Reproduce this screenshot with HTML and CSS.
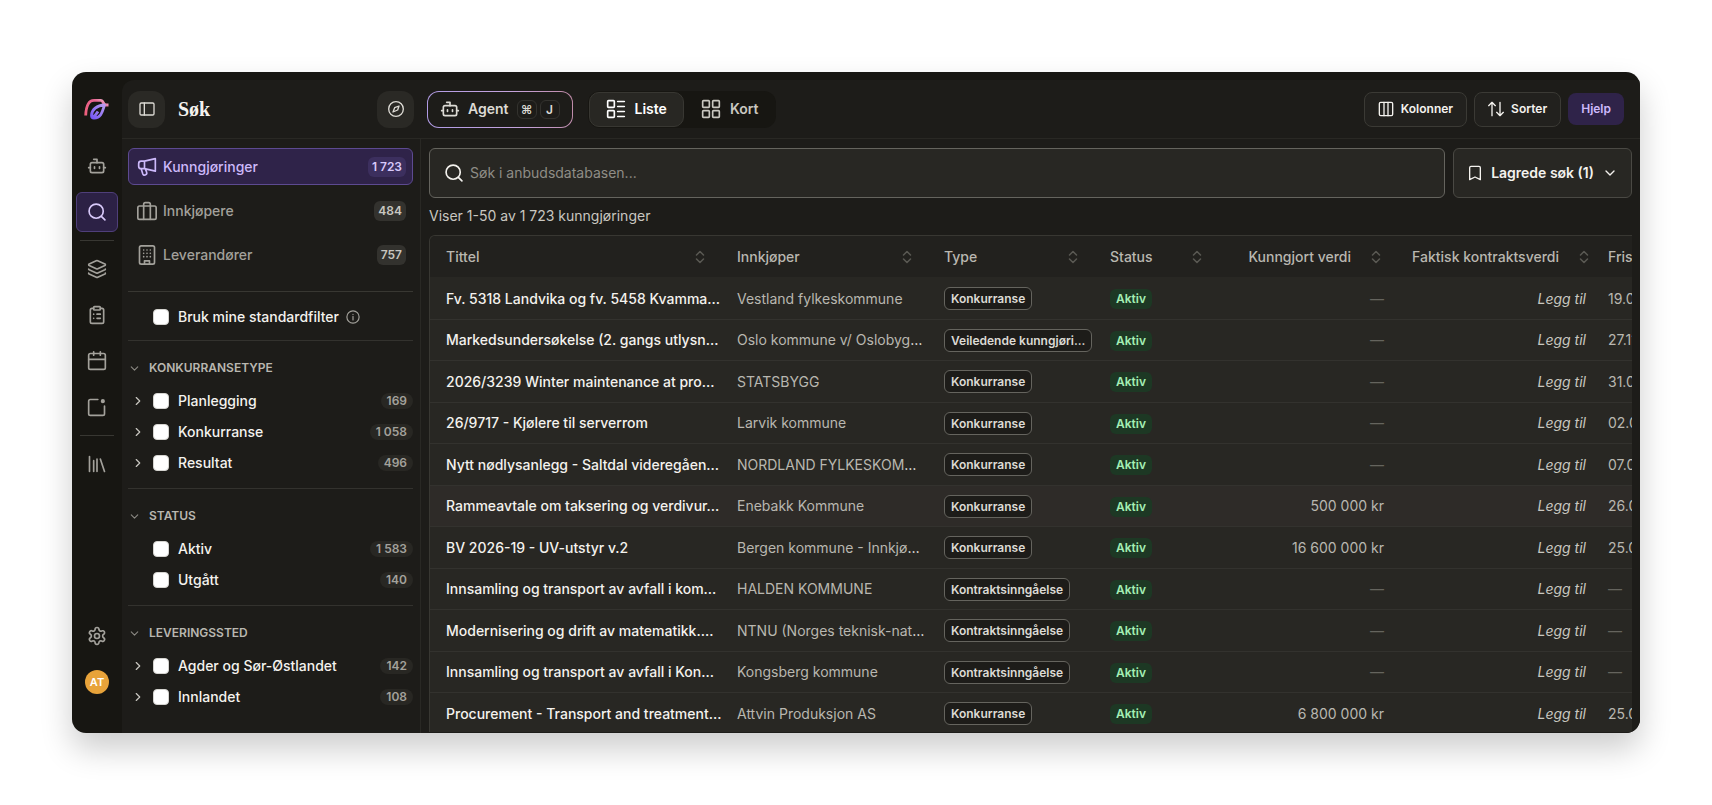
FILE: index.html
```
<!DOCTYPE html>
<html lang="no">

<head>
	<meta charset="UTF-8"/>
	<meta name="viewport" content="width=device-width, initial-scale=1.0"/>
	<title>Søk</title>
	<link rel="stylesheet" href="styles.css">
</head>

<body>
<!-- icons used more than once -->
<svg class="sprite" aria-hidden="true">
	<symbol id="bot" viewBox="0 0 24 24"><path d="M12 8V4H8"/><rect width="16" height="12" x="4" y="8" rx="2"/><path d="M2 14h2M20 14h2M15 13v2M9 13v2"/></symbol>
	<symbol id="search" viewBox="0 0 24 24"><circle cx="11" cy="11" r="8.5"/><path d="m21.5 21.5-4.3-4.3"/></symbol>
	<symbol id="down" viewBox="0 0 24 24"><path d="m6 9 6 6 6-6"/></symbol>
	<symbol id="right" viewBox="0 0 24 24"><path d="m9 18 6-6-6-6"/></symbol>
	<symbol id="sort" viewBox="0 0 10 14"><path d="m1.5 5 3.500-3.500L8.500 5M1.500 9 5 12.500 8.500 9"/></symbol>
</svg>

<div class="app">
	<nav class="rail">
		<svg class="logo" viewBox="0 0 28 24">
			<defs>
				<linearGradient id="pink" x1="0" y1="1" x2="1" y2="0">
					<stop offset="0" stop-color="#ee5f7c"/>
					<stop offset="0.700" stop-color="#e8638f"/>
					<stop offset="1" stop-color="#f3c3d8"/>
				</linearGradient>
				<linearGradient id="violet" x1="0" y1="1" x2="1" y2="0">
					<stop offset="0" stop-color="#7657f2"/>
					<stop offset="1" stop-color="#b79bf0"/>
				</linearGradient>
			</defs>
			<path d="M2.700 19.500C3 12 5 4.300 11 4.300h6.500c3.500 0 2 4.700 5.500 4.700h2.500" stroke="url(#pink)"/>
			<path d="M21.500 9C14 9 8.500 14 8.500 19.500c0 1.800 1 2.500 2.500 2.500 7.500 0 8.500-7 10.500-13ZM9.500 21.500c2.500-1.500 4-3.500 5.500-6" stroke="url(#violet)"/>
		</svg>
		<a class="rail-item" href="#" aria-label="Agent"><svg class="icon"><use href="#bot"/></svg></a>
		<a class="rail-item active" href="#" aria-label="Søk"><svg class="icon"><use href="#search"/></svg></a>
		<hr>
		<a class="rail-item" href="#" aria-label="Lag"><svg class="icon" viewBox="0 0 24 24"><path d="M12.800 2.200a2 2 0 0 0-1.700 0L2.600 6.100a1 1 0 0 0 0 1.800l8.600 3.900a2 2 0 0 0 1.700 0l8.600-3.900a1 1 0 0 0 0-1.800Z"/><path d="M2 12a1 1 0 0 0 .6.900l8.600 3.900a2 2 0 0 0 1.700 0l8.600-3.900A1 1 0 0 0 22 12"/><path d="M2 17a1 1 0 0 0 .6.900l8.600 3.900a2 2 0 0 0 1.700 0l8.600-3.900A1 1 0 0 0 22 17"/></svg></a>
		<a class="rail-item" href="#" aria-label="Oppgaver"><svg class="icon" viewBox="0 0 24 24"><rect width="8" height="4" x="8" y="2" rx="1"/><path d="M16 4h2a2 2 0 0 1 2 2v14a2 2 0 0 1-2 2H6a2 2 0 0 1-2-2V6a2 2 0 0 1 2-2h2M12 11h4M12 16h4M8 11h.01M8 16h.01"/></svg></a>
		<a class="rail-item" href="#" aria-label="Kalender"><svg class="icon" viewBox="0 0 24 24"><path d="M8 1v4M16 1v4M2 10h20"/><rect width="20" height="19" x="2" y="3" rx="2"/></svg></a>
		<a class="rail-item" href="#" aria-label="Varsler"><svg class="icon" viewBox="0 0 24 24"><path d="M13 3H4a2 2 0 0 0-2 2v15a2 2 0 0 0 2 2h15a2 2 0 0 0 2-2v-9"/><circle cx="19" cy="5" r="1.500" fill="currentColor"/></svg></a>
		<hr>
		<a class="rail-item" href="#" aria-label="Bibliotek"><svg class="icon" viewBox="0 0 24 24"><path d="m16 6 5 15M12 6v15M8 8v13M3 3v18"/></svg></a>
		<div class="rail-bottom">
			<a class="rail-item" href="#" aria-label="Innstillinger"><svg class="icon" viewBox="0 0 24 24"><path d="M9.700 4.100a2.300 2.300 0 0 1 4.600 0 2.300 2.300 0 0 0 3.300 1.900 2.300 2.300 0 0 1 2.300 4 2.300 2.300 0 0 0 0 4 2.300 2.300 0 0 1-2.300 4 2.300 2.300 0 0 0-3.300 1.900 2.300 2.300 0 0 1-4.600 0 2.300 2.300 0 0 0-3.300-1.900 2.300 2.300 0 0 1-2.300-4 2.300 2.300 0 0 0 0-4 2.300 2.300 0 0 1 2.300-4 2.300 2.300 0 0 0 3.300-1.900"/><circle cx="12" cy="12" r="3"/></svg></a>
			<button class="avatar">AT</button>
		</div>
	</nav>

	<div class="panel">
		<header class="topbar">
			<div class="topbar-side">
				<button class="square" aria-label="Skjul meny"><svg class="icon small" viewBox="0 0 24 24"><rect width="21" height="18" x="1.500" y="3" rx="2"/><path d="M8 3v18"/></svg></button>
				<h1>Søk</h1>
				<button class="square" aria-label="Utforsk"><svg class="icon small" viewBox="0 0 24 24"><circle cx="12" cy="12" r="11"/><path d="m16.500 7.500-2 6-7 3 2.500-6.500Z"/></svg></button>
			</div>
			<div class="topbar-main">
				<button class="agent">
					<svg class="icon"><use href="#bot"/></svg>
					<span>Agent</span>
					<span class="keys"><kbd>⌘</kbd><kbd>J</kbd></span>
				</button>
				<div class="segmented">
					<button class="active"><svg class="icon" viewBox="0 0 24 24"><rect width="8" height="8" x="2" y="2" rx="1"/><rect width="8" height="8" x="2" y="14" rx="1"/><path d="M14 3h8M14 9h8M14 15h8M14 21h8"/></svg>Liste</button>
					<button><svg class="icon" viewBox="0 0 24 24"><rect width="8" height="8" x="2" y="2" rx="1"/><rect width="8" height="8" x="14" y="2" rx="1"/><rect width="8" height="8" x="14" y="14" rx="1"/><rect width="8" height="8" x="2" y="14" rx="1"/></svg>Kort</button>
				</div>
				<div class="actions">
					<button class="tool"><svg class="icon small" viewBox="0 0 24 24"><rect width="20" height="20" x="2" y="2" rx="2"/><path d="M9 2v20M15 2v20"/></svg>Kolonner</button>
					<button class="tool"><svg class="icon small" viewBox="0 0 24 24"><path d="m1 7 5-5 5 5M6 2v20M23 17l-5 5-5-5M18 22V2"/></svg>Sorter</button>
					<button class="help">Hjelp</button>
				</div>
			</div>
		</header>

		<div class="body">
			<aside class="sidebar">
				<nav class="tabs">
					<a class="active" href="#"><svg class="icon" viewBox="0 0 24 24"><path d="m9 5 13-3v15L9 14M9 5v9H5a3 3 0 0 1-3-3V8a3 3 0 0 1 3-3ZM5 14l2 6.500a2 2 0 0 0 3 1c1.500-.5 2-2 1.500-3.500L10 14.500"/></svg><span>Kunngjøringer</span><b>1 723</b></a>
					<a href="#"><svg class="icon" viewBox="0 0 24 24"><rect width="22" height="16" x="1" y="6" rx="2"/><path d="M16 22V4a2 2 0 0 0-2-2h-4a2 2 0 0 0-2 2v18"/></svg><span>Innkjøpere</span><b>484</b></a>
					<a href="#"><svg class="icon" viewBox="0 0 24 24"><rect width="18" height="22" x="3" y="1" rx="2"/><path d="M9 23v-4h6v4M8 6h.01M12 6h.01M16 6h.01M8 10h.01M12 10h.01M16 10h.01M8 14h.01M12 14h.01M16 14h.01"/></svg><span>Leverandører</span><b>757</b></a>
				</nav>
				<div class="standard">
					<label class="check"><input type="checkbox">Bruk mine standardfilter</label>
					<svg class="icon info" viewBox="0 0 24 24"><circle cx="12" cy="12" r="10.500"/><path d="M12 17v-6M12 7.500h.01"/></svg>
				</div>
				<section class="filter">
					<h2><svg class="icon tiny"><use href="#down"/></svg>KONKURRANSETYPE</h2>
					<div class="option"><svg class="icon open"><use href="#right"/></svg><label class="check"><input type="checkbox">Planlegging</label><span class="count">169</span></div>
					<div class="option"><svg class="icon open"><use href="#right"/></svg><label class="check"><input type="checkbox">Konkurranse</label><span class="count">1 058</span></div>
					<div class="option"><svg class="icon open"><use href="#right"/></svg><label class="check"><input type="checkbox">Resultat</label><span class="count">496</span></div>
				</section>
				<section class="filter">
					<h2><svg class="icon tiny"><use href="#down"/></svg>STATUS</h2>
					<div class="option"><label class="check"><input type="checkbox">Aktiv</label><span class="count">1 583</span></div>
					<div class="option"><label class="check"><input type="checkbox">Utgått</label><span class="count">140</span></div>
				</section>
				<section class="filter">
					<h2><svg class="icon tiny"><use href="#down"/></svg>LEVERINGSSTED</h2>
					<div class="option"><svg class="icon open"><use href="#right"/></svg><label class="check"><input type="checkbox">Agder og Sør-Østlandet</label><span class="count">142</span></div>
					<div class="option"><svg class="icon open"><use href="#right"/></svg><label class="check"><input type="checkbox">Innlandet</label><span class="count">108</span></div>
				</section>
			</aside>

			<main class="content">
				<div class="searchbar">
					<label class="searchbox">
						<svg class="icon"><use href="#search"/></svg>
						<input type="text" placeholder="Søk i anbudsdatabasen..." aria-label="Søk i anbudsdatabasen">
					</label>
					<button class="saved"><svg class="icon small" viewBox="0 0 24 24"><path d="m20 22-8-4-8 4V4a2 2 0 0 1 2-2h12a2 2 0 0 1 2 2Z"/></svg>Lagrede søk (1)<svg class="icon small"><use href="#down"/></svg></button>
				</div>
				<p class="summary">Viser 1-50 av 1 723 kunngjøringer</p>
				<div class="table-wrap">
					<table>
						<colgroup>
							<col class="c-title"><col class="c-buyer"><col class="c-type"><col class="c-status"><col class="c-value"><col class="c-contract"><col class="c-date">
						</colgroup>
						<thead>
						<tr>
							<th><div>Tittel<svg class="sort"><use href="#sort"/></svg></div></th>
							<th><div>Innkjøper<svg class="sort"><use href="#sort"/></svg></div></th>
							<th><div>Type<svg class="sort"><use href="#sort"/></svg></div></th>
							<th><div>Status<svg class="sort"><use href="#sort"/></svg></div></th>
							<th class="num"><div>Kunngjort verdi<svg class="sort"><use href="#sort"/></svg></div></th>
							<th class="num"><div>Faktisk kontraktsverdi<svg class="sort"><use href="#sort"/></svg></div></th>
							<th><div>Frist</div></th>
						</tr>
						</thead>
						<tbody>
						<tr><td>Fv. 5318 Landvika og fv. 5458 Kvamma…</td><td>Vestland fylkeskommune</td><td><span class="type">Konkurranse</span></td><td><span class="status">Aktiv</span></td><td class="num none">—</td><td class="num"><button class="add">Legg til</button></td><td>19.08.2026</td></tr>
						<tr><td>Markedsundersøkelse (2. gangs utlysn…</td><td>Oslo kommune v/ Oslobyg<i>…</i></td><td><span class="type">Veiledende kunngjøri...</span></td><td><span class="status">Aktiv</span></td><td class="num none">—</td><td class="num"><button class="add">Legg til</button></td><td>27.11.2026</td></tr>
						<tr><td>2026/3239 Winter maintenance at pro…</td><td>STATSBYGG</td><td><span class="type">Konkurranse</span></td><td><span class="status">Aktiv</span></td><td class="num none">—</td><td class="num"><button class="add">Legg til</button></td><td>31.08.2026</td></tr>
						<tr><td>26/9717 - Kjølere til serverrom</td><td>Larvik kommune</td><td><span class="type">Konkurranse</span></td><td><span class="status">Aktiv</span></td><td class="num none">—</td><td class="num"><button class="add">Legg til</button></td><td>02.09.2026</td></tr>
						<tr><td>Nytt nødlysanlegg - Saltdal videregåen…</td><td>NORDLAND FYLKESKOM<i>…</i></td><td><span class="type">Konkurranse</span></td><td><span class="status">Aktiv</span></td><td class="num none">—</td><td class="num"><button class="add">Legg til</button></td><td>07.09.2026</td></tr>
						<tr class="hovered"><td>Rammeavtale om taksering og verdivur…</td><td>Enebakk Kommune</td><td><span class="type">Konkurranse</span></td><td><span class="status">Aktiv</span></td><td class="num">500 000 kr</td><td class="num"><button class="add">Legg til</button></td><td>26.08.2026</td></tr>
						<tr><td>BV 2026-19 - UV-utstyr v.2</td><td>Bergen kommune - Innkjø<i>…</i></td><td><span class="type">Konkurranse</span></td><td><span class="status">Aktiv</span></td><td class="num">16 600 000 kr</td><td class="num"><button class="add">Legg til</button></td><td>25.08.2026</td></tr>
						<tr><td>Innsamling og transport av avfall i kom…</td><td>HALDEN KOMMUNE</td><td><span class="type">Kontraktsinngåelse</span></td><td><span class="status">Aktiv</span></td><td class="num none">—</td><td class="num"><button class="add">Legg til</button></td><td class="none">—</td></tr>
						<tr><td>Modernisering og drift av matematikk.…</td><td>NTNU (Norges teknisk-nat<i>…</i></td><td><span class="type">Kontraktsinngåelse</span></td><td><span class="status">Aktiv</span></td><td class="num none">—</td><td class="num"><button class="add">Legg til</button></td><td class="none">—</td></tr>
						<tr><td>Innsamling og transport av avfall i Kon…</td><td>Kongsberg kommune</td><td><span class="type">Kontraktsinngåelse</span></td><td><span class="status">Aktiv</span></td><td class="num none">—</td><td class="num"><button class="add">Legg til</button></td><td class="none">—</td></tr>
						<tr><td>Procurement - Transport and treatment…</td><td>Attvin Produksjon AS</td><td><span class="type">Konkurranse</span></td><td><span class="status">Aktiv</span></td><td class="num">6 800 000 kr</td><td class="num"><button class="add">Legg til</button></td><td>25.08.2026</td></tr>
						</tbody>
					</table>
				</div>
			</main>
		</div>
	</div>
</div>
</body>

</html>
```
FILE: styles.css
```
* {
	box-sizing: border-box;
}

body {
	margin: 0;
	height: 100vh;
	padding: 72px;
	background: #fff;
	color: #f4f2ee;
	font-family: Inter, "Liberation Sans", sans-serif;
	font-size: 14px;
	line-height: 20px;
	overflow: hidden;
}

button {
	font: inherit;
	color: inherit;
	border: none;
	background: none;
	padding: 0;
	cursor: pointer;
}

a {
	color: inherit;
	text-decoration: none;
}

.sprite {
	display: none;
}

.icon {
	width: 20px;
	height: 20px;
	flex: none;
	fill: none;
	stroke: currentColor;
	stroke-width: 2;
	stroke-linecap: round;
	stroke-linejoin: round;
}

.icon.small {
	width: 16px;
	height: 16px;
}

.app {
	height: 100%;
	display: flex;
	background: #171612;
	border-radius: 14px;
	overflow: hidden;
	box-shadow: 0 16px 32px rgba(0, 0, 0, 0.2);
}

/* left icon rail */
.rail {
	width: 50px;
	flex: none;
	display: flex;
	flex-direction: column;
	align-items: center;
	gap: 6px;
	padding: 24px 0 39px;
	color: #a3a19b;
}

.logo {
	width: 28px;
	height: 24px;
	margin-bottom: 20px;
	fill: none;
	stroke-width: 2.8;
	stroke-linejoin: round;
}

.rail-item {
	width: 42px;
	height: 40px;
	display: flex;
	align-items: center;
	justify-content: center;
	border-radius: 6px;
}

.rail-item.active {
	background: #2c2145;
	border: 1px solid #4f3f7a;
	color: #d8c9fa;
}

.rail hr {
	width: 34px;
	margin: 2px 0;
	border: none;
	border-top: 1px solid #383732;
}

.rail-bottom {
	margin-top: auto;
	display: flex;
	flex-direction: column;
	align-items: center;
	gap: 14px;
}

.avatar {
	width: 24px;
	height: 24px;
	border-radius: 50%;
	background: #e8a33a;
	color: #fff;
	font-size: 11px;
	font-weight: 600;
}

.panel {
	flex: 1;
	min-width: 0;
	display: flex;
	flex-direction: column;
	margin-top: 8px;
	background: #1d1c19;
	border-radius: 12px 0 0 0;
}

/* header */
.topbar {
	height: 59px;
	flex: none;
	display: flex;
	align-items: center;
	border-bottom: 1px solid #292824;
}

.topbar-side {
	width: 298px;
	display: flex;
	align-items: center;
	padding: 0 6px;
}

.topbar-side h1 {
	flex: 1;
	margin: 0 0 0 13px;
	font-family: "Liberation Serif", serif;
	font-size: 20px;
	font-weight: 700;
}

.square {
	width: 37px;
	height: 37px;
	display: flex;
	align-items: center;
	justify-content: center;
	background: #2a2925;
	border-radius: 12px;
	color: #dcdad4;
}

.topbar-main {
	flex: 1;
	display: flex;
	align-items: center;
	padding: 0 16px 0 7px;
}

.agent {
	height: 37px;
	display: flex;
	align-items: center;
	gap: 8px;
	padding: 0 12px;
	border: 1px solid transparent;
	border-radius: 12px;
	background: linear-gradient(#1d1c19, #1d1c19) padding-box, linear-gradient(75deg, #b09be6, #c4a3dc 60%, #c08aa6) border-box;
	color: #dcdad4;
	font-weight: 600;
}

.keys {
	display: flex;
	gap: 3px;
}

kbd {
	min-width: 20px;
	height: 19px;
	border: 1px solid #33322e;
	border-radius: 6px;
	font-family: Inter, "DejaVu Sans", sans-serif;
	font-size: 12px;
	line-height: 17px;
	text-align: center;
}

.segmented {
	display: flex;
	margin-left: 15px;
	padding: 1px;
	background: #171612;
	border-radius: 12px;
	font-weight: 600;
}

.segmented button {
	height: 35px;
	display: flex;
	align-items: center;
	gap: 9px;
	padding: 0 16px;
	border: 1px solid transparent;
	border-radius: 10px;
	color: #c9c7c0;
}

.segmented button.active {
	background: #282723;
	border-color: #383732;
	color: #fff;
}

.actions {
	margin-left: auto;
	display: flex;
	align-items: center;
	gap: 7px;
	font-size: 12px;
	font-weight: 600;
}

.tool {
	height: 35px;
	display: flex;
	align-items: center;
	gap: 7px;
	padding: 0 13px;
	border: 1px solid #3b3a35;
	border-radius: 8px;
	background: #22211e;
}

.help {
	height: 32px;
	padding: 0 13px;
	border-radius: 8px;
	background: #2f2349;
	color: #cdb9fb;
}

.body {
	flex: 1;
	min-height: 0;
	display: flex;
}

/* filters */
.sidebar {
	width: 299px;
	flex: none;
	padding: 9px 7px 0 6px;
	border-right: 1px solid #292824;
	overflow: hidden;
}

.tabs {
	display: flex;
	flex-direction: column;
	gap: 7px;
	padding-bottom: 18px;
}

.tabs a {
	height: 37px;
	display: flex;
	align-items: center;
	gap: 6px;
	padding: 0 6px 0 8px;
	border: 1px solid transparent;
	border-radius: 6px;
	color: #a3a19b;
	font-weight: 500;
}

.tabs span {
	flex: 1;
}

.tabs b {
	padding: 0 4px;
	border-radius: 6px;
	background: #33322e;
	color: #c9c7c0;
	font-size: 12px;
	font-weight: 600;
}

.tabs .active {
	background: #2f2349;
	border-color: #5d4a91;
	color: #cdb9fb;
}

.tabs .active b {
	background: #3c2f5e;
	color: #d8c9fa;
}

.standard {
	height: 50px;
	display: flex;
	align-items: center;
	gap: 7px;
	padding: 2px 0 0 25px;
	border-top: 1px solid #383732;
	border-bottom: 1px solid #33322e;
}

.icon.info {
	width: 14px;
	height: 14px;
	color: #a3a19b;
}

.check {
	display: flex;
	align-items: center;
	gap: 9px;
	font-weight: 500;
}

.check input {
	appearance: none;
	width: 16px;
	height: 16px;
	margin: 0;
	background: #fff;
	border: 1px solid #d5d4d0;
	border-radius: 4px;
}

.filter {
	padding: 17px 0 10px;
	border-bottom: 1px solid #33322e;
}

.filter:last-child {
	border-bottom: none;
}

.filter h2 {
	display: flex;
	align-items: center;
	gap: 8px;
	margin: 0 0 7px;
	font-size: 12px;
	font-weight: 600;
	color: #b9b7b0;
}

.icon.tiny {
	width: 13px;
	height: 13px;
	color: #8b8983;
}

.option {
	height: 31px;
	display: flex;
	align-items: center;
	padding-left: 25px;
}

.option .check {
	flex: 1;
}

/* the arrow hangs in the indent of the row */
.icon.open {
	width: 14px;
	height: 14px;
	margin: 0 8px 0 -22px;
	color: #c9c7c0;
}

.count {
	flex: none;
	padding: 0 6px;
	border-radius: 8px;
	background: #282723;
	color: #a3a19b;
	font-size: 12px;
	font-weight: 600;
	line-height: 16px;
}

/* results */
.content {
	flex: 1;
	min-width: 0;
	display: flex;
	flex-direction: column;
	padding: 9px 8px 1px;
}

.searchbar {
	display: flex;
	gap: 8px;
}

.searchbox {
	flex: 1;
	height: 50px;
	display: flex;
	align-items: center;
	gap: 6px;
	padding: 0 14px;
	background: #282723;
	border: 1px solid #65645e;
	border-radius: 6px;
}

.searchbox input {
	flex: 1;
	padding: 0;
	border: none;
	outline: none;
	background: none;
	color: inherit;
	font: inherit;
}

.searchbox input::placeholder {
	color: #8f8d86;
}

.saved {
	height: 50px;
	display: flex;
	align-items: center;
	gap: 8px;
	padding: 0 13px;
	background: #282723;
	border: 1px solid #4a4944;
	border-radius: 6px;
	font-weight: 600;
}

.summary {
	margin: 8px 0 9px;
	color: #c9c7c0;
}

.table-wrap {
	flex: 1;
	min-height: 0;
	overflow: hidden;
	background: #282723;
	border: 1px solid #383732;
	border-width: 1px 0 0 1px;
	border-radius: 6px 0 0 0;
}

table {
	width: 1320px;
	table-layout: fixed;
	border-collapse: separate;
	border-spacing: 0;
}

.c-title {
	width: 299px;
}

.c-buyer {
	width: 207px;
}

.c-type,
.c-value {
	width: 166px;
}

.c-status {
	width: 124px;
}

.c-contract {
	width: 208px;
}

th,
td {
	padding: 0 8px;
	text-align: left;
	white-space: nowrap;
	color: #b9b7b0;
}

th {
	height: 42px;
	padding-right: 24px;
	background: #22211e;
	border-bottom: 1px solid #282723;
	font-weight: 500;
}

th.num {
	padding-right: 11px;
}

th div {
	display: flex;
	align-items: center;
	justify-content: space-between;
}

th.num div {
	justify-content: flex-end;
	gap: 20px;
}

th:first-child,
td:first-child {
	padding-left: 16px;
}

td {
	height: 42px;
	border-bottom: 1px solid #33322e;
}

tr:nth-child(even) td {
	height: 41px;
}

td:first-child {
	color: #f4f2ee;
	font-weight: 500;
}

td.num {
	text-align: right;
}

td.none {
	color: #65645e;
}

td i {
	color: #f4f2ee;
	font-style: normal;
}

.hovered td {
	background: #2e2b28;
}

.sort {
	width: 10px;
	height: 14px;
	flex: none;
	fill: none;
	stroke: #5a5953;
	stroke-width: 1.5;
	stroke-linecap: round;
	stroke-linejoin: round;
}

.type,
.status {
	display: inline-block;
	padding: 0 6px;
	border-radius: 6px;
	font-size: 12px;
	font-weight: 600;
	line-height: 20px;
	vertical-align: middle;
}

.type {
	border: 1px solid #65645e;
	background: #1d1c19;
	color: #dcdad4;
	line-height: 21px;
}

.status {
	background: #1d3824;
	color: #a4efb4;
}

.add {
	padding: 0 6px;
	color: #c9c7c0;
	font-style: italic;
}
```
